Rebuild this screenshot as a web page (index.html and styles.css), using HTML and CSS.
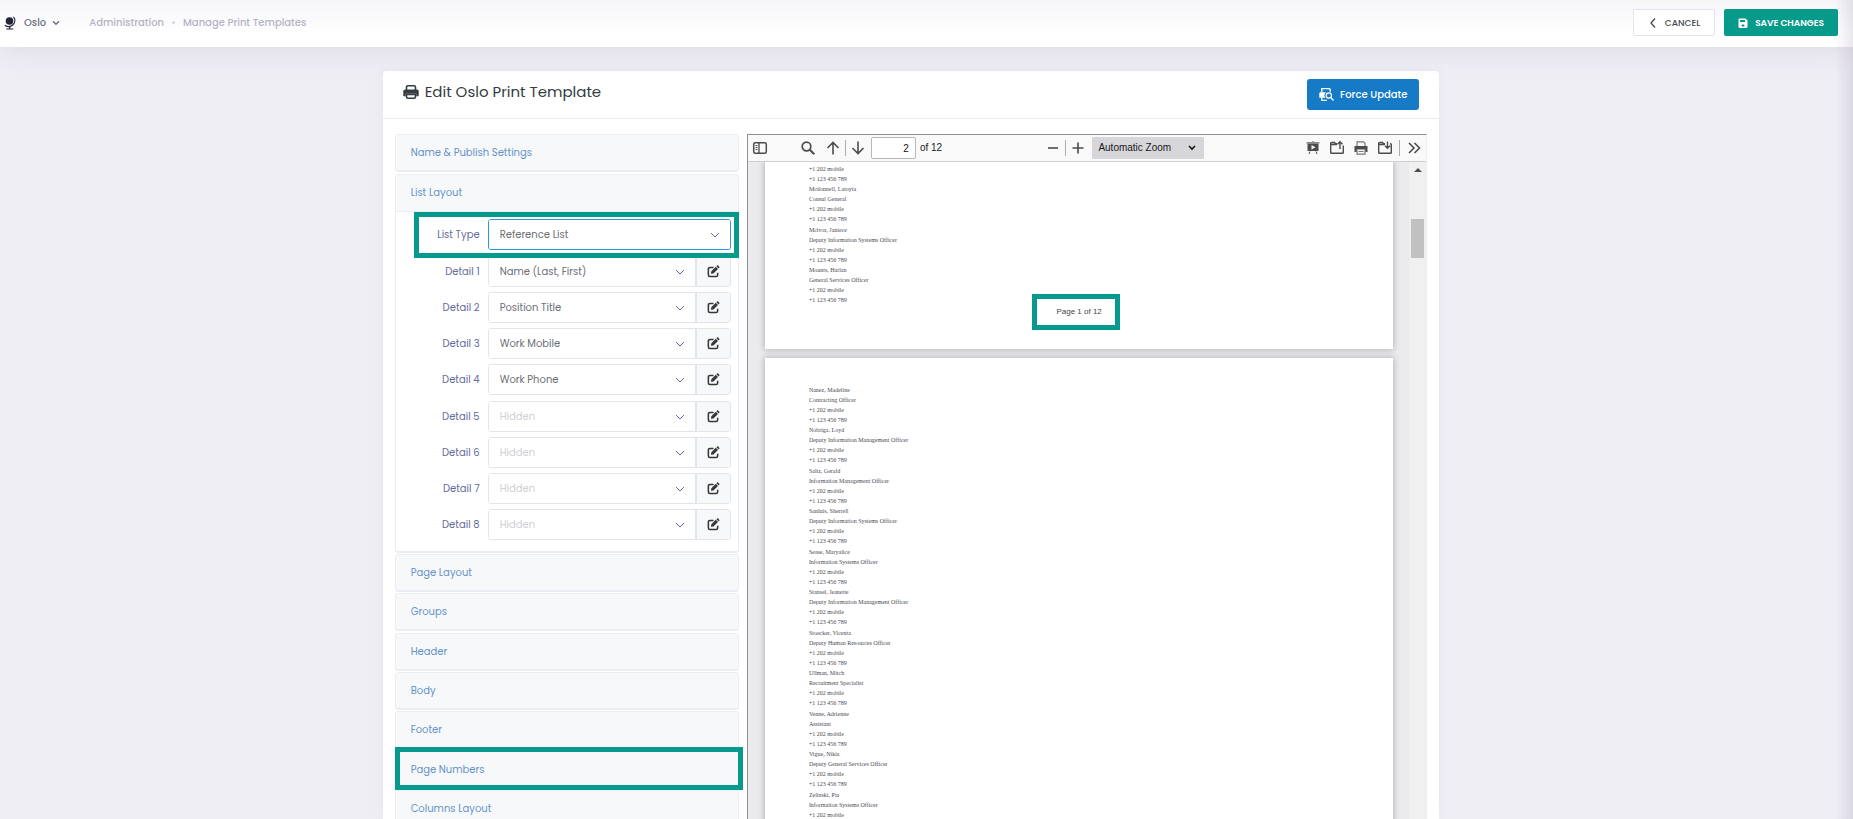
FILE: index.html
```html
<!DOCTYPE html>
<html lang="en">
<head>
<meta charset="utf-8">
<title>Edit Oslo Print Template</title>
<link rel="stylesheet" href="styles.css">
</head>
<body>
<svg class="sprite" aria-hidden="true">
  <symbol id="edit" viewBox="0 0 16 16"><path d="M8 3H3.600C2.400 3 1.700 3.700 1.700 4.800v7.600c0 1.100.7 1.800 1.900 1.800h7.600c1.200 0 1.900-.7 1.900-1.800V9.500" fill="none" stroke="currentColor" stroke-width="1.900"/><path d="M5.300 7.700 10.800 2.300l2.700 2.700-5.500 5.400-3.200.5zM11.600 1.500l.8-.8c.4-.4.9-.4 1.300 0l1.400 1.400c.4.4.4.9 0 1.300l-.8.8z" fill="currentColor"/></symbol>
  <symbol id="printer" viewBox="0 0 16 16"><path d="M3.500 6V3.200c0-.9.500-1.400 1.400-1.400h6.200c.9 0 1.400.5 1.400 1.400V6M3.500 10.500v2.300c0 .9.500 1.400 1.400 1.400h6.200c.9 0 1.400-.5 1.400-1.400v-2.300z" fill="none" stroke="currentColor" stroke-width="1.600"/><path d="M2.200 5.500h11.600c1.200 0 1.900.7 1.900 1.900v3.800c0 .7-.3 1-1 1h-1.400V9.800H2.700v2.400H1.300c-.7 0-1-.3-1-1V7.400c0-1.200.7-1.900 1.900-1.900z" fill="currentColor"/></symbol>
</svg>
<header class="topbar">
  <button class="post" type="button">
    <svg class="globe" viewBox="0 0 12 14"><circle cx="5.500" cy="5" r="3.800" fill="currentColor"/><path d="M9.500.8c1.900 2.600 1.700 6-.5 8C6.600 11 3.200 11 .8 9.200M5.700 10v3M2.300 13h7" fill="none" stroke="currentColor" stroke-width="1.200"/></svg>
    Oslo
    <svg class="caret" viewBox="0 0 8 6"><path d="M1 1.200l3 3 3-3" fill="none" stroke="currentColor" stroke-width="1.400"/></svg>
  </button>
  <nav class="crumbs" aria-label="Breadcrumb">
    <a href="#">Administration</a><span class="dot"></span><a href="#">Manage Print Templates</a>
  </nav>
  <div class="actions">
    <button class="btn cancel" type="button"><svg viewBox="0 0 10 12"><path d="M7 1.500 3 6l4 4.500" fill="none" stroke="currentColor" stroke-width="1.300"/></svg>CANCEL</button>
    <button class="btn save" type="button"><svg viewBox="0 0 10 12"><path d="M1.500 1.500h6L9.500 3.500v6.300c0 .7-.5 1.200-1.200 1.200H1.700C1 11 .5 10.500.5 9.800V2.500c0-.6.4-1 1-1z" fill="currentColor"/><path d="M2 3h5v2H2zM4.500 7h1v1h1v1h-1v1h-1V9h-1V8h1z" fill="#069a8a"/></svg>SAVE CHANGES</button>
  </div>
</header>
<main class="content">
  <section class="card">
    <div class="card-head">
      <h1><svg viewBox="0 0 16 16"><use href="#printer"/></svg>Edit Oslo Print Template</h1>
      <button class="update" type="button"><svg viewBox="0 0 16 16"><path d="M3 5.500V1.800h8l1 1V5M3 11v3.200h5.500" fill="none" stroke="currentColor" stroke-width="1.400"/><path d="M1.500 5.500H7.500A4.300 4.300 0 0 0 7 11.500H.3V7c0-.8.5-1.500 1.200-1.500z" fill="currentColor"/><circle cx="10.500" cy="9" r="2.800" fill="none" stroke="currentColor" stroke-width="1.300"/><path d="M12.600 11.300l2.900 3" stroke="currentColor" stroke-width="1.500"/></svg>Force Update</button>
    </div>
    <div class="card-body">
      <div class="accordion">
        <div class="panel"><button class="panel-head" type="button">Name &amp; Publish Settings</button></div>
        <div class="panel open">
          <button class="panel-head" type="button">List Layout</button>
          <form class="fields">
            <div class="row first marked"><label for="lt">List Type</label><div class="control"><select id="lt"><option>Reference List</option></select></div></div>
            <div class="row"><label for="d1">Detail 1</label><div class="control"><select id="d1"><option>Name (Last, First)</option></select><button type="button" aria-label="Edit detail 1"><svg><use href="#edit"/></svg></button></div></div>
            <div class="row"><label for="d2">Detail 2</label><div class="control"><select id="d2"><option>Position Title</option></select><button type="button" aria-label="Edit detail 2"><svg><use href="#edit"/></svg></button></div></div>
            <div class="row"><label for="d3">Detail 3</label><div class="control"><select id="d3"><option>Work Mobile</option></select><button type="button" aria-label="Edit detail 3"><svg><use href="#edit"/></svg></button></div></div>
            <div class="row"><label for="d4">Detail 4</label><div class="control"><select id="d4"><option>Work Phone</option></select><button type="button" aria-label="Edit detail 4"><svg><use href="#edit"/></svg></button></div></div>
            <div class="row"><label for="d5">Detail 5</label><div class="control"><select id="d5" class="empty"><option>Hidden</option></select><button type="button" aria-label="Edit detail 5"><svg><use href="#edit"/></svg></button></div></div>
            <div class="row"><label for="d6">Detail 6</label><div class="control"><select id="d6" class="empty"><option>Hidden</option></select><button type="button" aria-label="Edit detail 6"><svg><use href="#edit"/></svg></button></div></div>
            <div class="row"><label for="d7">Detail 7</label><div class="control"><select id="d7" class="empty"><option>Hidden</option></select><button type="button" aria-label="Edit detail 7"><svg><use href="#edit"/></svg></button></div></div>
            <div class="row"><label for="d8">Detail 8</label><div class="control"><select id="d8" class="empty"><option>Hidden</option></select><button type="button" aria-label="Edit detail 8"><svg><use href="#edit"/></svg></button></div></div>
          </form>
        </div>
        <div class="panel"><button class="panel-head" type="button">Page Layout</button></div>
        <div class="panel"><button class="panel-head" type="button">Groups</button></div>
        <div class="panel"><button class="panel-head" type="button">Header</button></div>
        <div class="panel"><button class="panel-head" type="button">Body</button></div>
        <div class="panel"><button class="panel-head" type="button">Footer</button></div>
        <div class="panel marked"><button class="panel-head" type="button">Page Numbers</button></div>
        <div class="panel"><button class="panel-head" type="button">Columns Layout</button></div>
      </div>
      <div class="viewer">
        <div class="toolbar">
          <button class="tool side" type="button" aria-label="Toggle sidebar"><svg viewBox="0 0 16 16"><rect x="1.700" y="2.700" width="12.600" height="10.600" rx="1.500" fill="none" stroke="currentColor" stroke-width="1.500"/><path d="M7 3v10" stroke="currentColor" stroke-width="1.300"/><path d="M3.500 5.500h2M3.500 7.500h2M3.500 9.500h2" stroke="currentColor"/></svg></button>
          <button class="tool" type="button" aria-label="Find"><svg viewBox="0 0 16 16"><circle cx="6.500" cy="6.500" r="4.300" fill="none" stroke="currentColor" stroke-width="1.700"/><path d="M9.800 9.800l4.500 4.500" stroke="currentColor" stroke-width="2"/></svg></button>
          <div class="pair">
            <button class="tool" type="button" aria-label="Previous page"><svg viewBox="0 0 16 16"><path d="M8 14.500V2.500M2.500 8 8 2.500 13.500 8" fill="none" stroke="currentColor" stroke-width="1.600"/></svg></button>
            <span class="sep"></span>
            <button class="tool" type="button" aria-label="Next page"><svg viewBox="0 0 16 16"><path d="M8 1.500v12M2.500 8 8 13.500 13.500 8" fill="none" stroke="currentColor" stroke-width="1.600"/></svg></button>
          </div>
          <input class="page-no" type="text" value="2" aria-label="Page">
          <span class="total">of 12</span>
          <div class="pair zoom">
            <button class="tool" type="button" aria-label="Zoom out"><svg viewBox="0 0 16 16"><path d="M3 8h10" stroke="currentColor" stroke-width="1.600"/></svg></button>
            <span class="sep"></span>
            <button class="tool" type="button" aria-label="Zoom in"><svg viewBox="0 0 16 16"><path d="M2.500 8h11M8 2.500v11" stroke="currentColor" stroke-width="1.600"/></svg></button>
          </div>
          <select class="scale" aria-label="Zoom"><option>Automatic Zoom</option></select>
          <div class="right-tools">
            <button class="tool" type="button" aria-label="Presentation mode"><svg viewBox="0 0 16 16"><path d="M1.500 2h13v1.500h-13z" fill="#8a8a8d"/><path d="M2.500 3.500h11v7.500h-11z" fill="currentColor"/><path d="M6.500 5v4.500L10.500 7.200z" fill="#f9f9fa"/><path d="M5 11.500 4 14M11 11.500l1 2.500M8 1v1" stroke="currentColor"/></svg></button>
            <button class="tool" type="button" aria-label="Open file"><svg viewBox="0 0 16 16"><path d="M8 3.700H6.500L5.500 2.500H2.500c-.6 0-.8.3-.8.8v9.200c0 .5.300.8.8.8h11c.5 0 .8-.3.800-.8V5.500M2 4.500h6M11 9V2M8.500 4.200 11 1.700l2.500 2.500" fill="none" stroke="currentColor" stroke-width="1.400"/></svg></button>
            <button class="tool" type="button" aria-label="Print"><svg viewBox="0 0 16 16"><path d="M4 6V1.800h6.500L12 3.300V6" fill="none" stroke="#77777a" stroke-width="1.200"/><path d="M1.500 6h13v6h-2.300V9.500H3.800V12H1.500z" fill="currentColor"/><path d="M4 10v4.200h8V10M5.500 11.500h5" fill="none" stroke="#77777a" stroke-width="1.200"/></svg></button>
            <button class="tool" type="button" aria-label="Download"><svg viewBox="0 0 16 16"><path d="M8 3.700H6.500L5.500 2.500H2.500c-.6 0-.8.3-.8.8v9.200c0 .5.300.8.8.8h11c.5 0 .8-.3.800-.8V4.500c0-.5-.3-.8-.8-.8H13M2 4.500h6M10.500 1.500V8M8 5.800l2.500 2.500L13 5.800" fill="none" stroke="currentColor" stroke-width="1.400"/></svg></button>
            <span class="sep"></span>
            <button class="tool" type="button" aria-label="More tools"><svg viewBox="0 0 16 16"><path d="M3 3l5 5-5 5M8.500 3l5 5-5 5" fill="none" stroke="currentColor" stroke-width="1.600"/></svg></button>
          </div>
        </div>
        <div class="stage">
          <div class="pages">
            <article class="sheet end">
              <ul><li>+1 202 mobile</li><li>+1 123 456 789</li></ul>
              <ul><li>Mcdonnell, Latoyia</li><li>Consul General</li><li>+1 202 mobile</li><li>+1 123 456 789</li></ul>
              <ul><li>Mcivor, Janiece</li><li>Deputy Information Systems Officer</li><li>+1 202 mobile</li><li>+1 123 456 789</li></ul>
              <ul><li>Mounts, Harlan</li><li>General Services Officer</li><li>+1 202 mobile</li><li>+1 123 456 789</li></ul>
              <div class="folio">Page 1 of 12</div>
            </article>
            <article class="sheet">
              <ul><li>Nanez, Madeline</li><li>Contracting Officer</li><li>+1 202 mobile</li><li>+1 123 456 789</li></ul>
              <ul><li>Nobriga, Loyd</li><li>Deputy Information Management Officer</li><li>+1 202 mobile</li><li>+1 123 456 789</li></ul>
              <ul><li>Saltz, Gerald</li><li>Information Management Officer</li><li>+1 202 mobile</li><li>+1 123 456 789</li></ul>
              <ul><li>Sanluis, Sherrell</li><li>Deputy Information Systems Officer</li><li>+1 202 mobile</li><li>+1 123 456 789</li></ul>
              <ul><li>Sease, Maryalice</li><li>Information Systems Officer</li><li>+1 202 mobile</li><li>+1 123 456 789</li></ul>
              <ul><li>Stansel, Jeanette</li><li>Deputy Information Management Officer</li><li>+1 202 mobile</li><li>+1 123 456 789</li></ul>
              <ul><li>Stoecker, Vicenta</li><li>Deputy Human Resources Officer</li><li>+1 202 mobile</li><li>+1 123 456 789</li></ul>
              <ul><li>Ullman, Mitch</li><li>Recruitment Specialist</li><li>+1 202 mobile</li><li>+1 123 456 789</li></ul>
              <ul><li>Venne, Adrienne</li><li>Assistant</li><li>+1 202 mobile</li><li>+1 123 456 789</li></ul>
              <ul><li>Vigue, Nikia</li><li>Deputy General Services Officer</li><li>+1 202 mobile</li><li>+1 123 456 789</li></ul>
              <ul><li>Zelinski, Pia</li><li>Information Systems Officer</li><li>+1 202 mobile</li></ul>
            </article>
          </div>
          <div class="scrollbar"><span class="up"></span><span class="thumb"></span></div>
        </div>
      </div>
    </div>
  </section>
</main>
<div class="edge"></div>
</body>
</html>
```
FILE: styles.css
```css
* { box-sizing: border-box; }
html, body { height: 100%; }
body {
  margin: 0;
  display: flex;
  flex-direction: column;
  overflow: hidden;
  background: #efeef5;
  color: #3d3f4b;
  font: 400 10px/18px Poppins, "Open Sans", sans-serif;
}
button, input, select { font: inherit; color: inherit; margin: 0; }
button { border: 0; padding: 0; background: none; }
svg { flex: none; display: block; }
.sprite { position: absolute; width: 0; height: 0; }

.topbar {
  position: relative;
  z-index: 1;
  flex: none;
  display: flex;
  align-items: center;
  height: 47px;
  padding: 0 15px 2px 4px;
  background: linear-gradient(#f6f6f9, #fff 75%);
  box-shadow: 0 0 30px rgba(82, 63, 105, .14);
}
.post { display: flex; align-items: center; gap: 6px; font-weight: 500; color: #6c6f80; }
.globe { width: 12px; height: 14px; margin-right: 2px; color: #22223a; }
.caret { width: 8px; height: 6px; }
.crumbs { display: flex; align-items: center; margin-left: 29px; }
.crumbs a { color: #b4b3c8; font-weight: 500; text-decoration: none; }
.dot { width: 3px; height: 3px; margin: 0 8px; border-radius: 50%; background: #d5d4e2; }
.actions { display: flex; gap: 9px; margin-left: auto; }
.btn {
  display: flex;
  align-items: center;
  gap: 7px;
  height: 27px;
  padding: 0 14px;
  border-radius: 2px;
  font-size: 9px;
}
.btn svg { width: 10px; height: 12px; }
.cancel { border: 1px solid #e2e5ec; background: #fff; color: #46484f; font-weight: 500; }
.save { background: #069a8a; color: #fff; font-weight: 600; }

.content { flex: 1; display: flex; justify-content: center; min-height: 0; padding: 24px 31px 0 0; }
.card {
  display: flex;
  flex-direction: column;
  width: 58%;
  background: #fff;
  border-radius: 4px 4px 0 0;
  box-shadow: 0 0 13px rgba(82, 63, 105, .05);
}
.card-head {
  flex: none;
  display: flex;
  align-items: center;
  justify-content: space-between;
  height: 48px;
  padding: 0 20px;
  border-bottom: 1px solid #ebedf2;
}
h1 { display: flex; align-items: center; gap: 6px; margin: 0 0 6px; font-size: 15px; font-weight: 400; line-height: 22px; color: #333c40; }
h1 svg { width: 16px; height: 16px; }
.update {
  display: flex;
  align-items: center;
  gap: 6px;
  height: 31px;
  padding: 0 12px;
  border-radius: 3px;
  background: #167ac6;
  color: #fff;
  font-weight: 500;
}
.update svg { width: 15px; height: 15px; }
.card-body { flex: 1; display: grid; grid-template-columns: 344fr 680fr; gap: 8px; min-height: 0; padding: 15px 12px 0; }

.accordion { min-width: 0; }
.panel { position: relative; margin-bottom: 1px; border: 1px solid #ebedf2; border-bottom-width: 2px; border-radius: 3px; }
.panel:nth-child(3n + 1) { margin-bottom: 2px; }
.panel-head {
  display: block;
  width: 100%;
  height: 35px;
  padding: 0 15px;
  background: #f7f8fa;
  color: #6494c8;
  text-align: left;
}
.open .panel-head { height: 37px; border-bottom: 1px solid #ebedf2; }
.fields { display: flex; flex-direction: column; gap: 5px; padding: 7px 7px 10px 0; }
.row { position: relative; display: grid; grid-template-columns: 84px 1fr; gap: 8px; align-items: center; height: 31px; }
.row label { text-align: right; color: #646c9a; }
.row:nth-child(4n + 1) { margin-bottom: 1px; }
.control { display: flex; height: 31px; border: 1px solid #e2e5ec; border-radius: 3px; overflow: hidden; }
.control select {
  flex: 1;
  min-width: 0;
  border: 0;
  padding: 0 11px;
  appearance: none;
  background: #fff url("data:image/svg+xml,%3Csvg xmlns='http://www.w3.org/2000/svg' viewBox='0 0 10 6'%3E%3Cpath d='M1 1l4 4 4-4' fill='none' stroke='%23646c9a'/%3E%3C/svg%3E") no-repeat right 10px center / 10px 6px;
  color: #6c6e74;
}
.control .empty { color: #cfd0d6; }
.control button { display: grid; place-items: center; width: 35px; border-left: 2px solid #e2e5ec; background: #f7f8fa; color: #33383c; }
.control button svg { width: 13px; height: 13px; }
.first .control { border-color: #2a95e0; }
.marked::after { content: ""; position: absolute; z-index: 1; border: 5px solid #069a8e; pointer-events: none; }
.row.marked::after { inset: -7px -8px -8px 18px; }
.panel.marked::after { inset: -5px -5px -3px -1px; }

.viewer { display: flex; flex-direction: column; min-width: 0; min-height: 0; border-top: 1px solid #8f8f94; border-left: 1px solid #8f8f94; border-right: 1px solid #eee; }
.toolbar {
  flex: none;
  display: flex;
  align-items: center;
  height: 27px;
  padding: 0 4px;
  border-bottom: 1px solid #cfcfd1;
  background: #f9f9fa;
  color: #4c4c4f;
  font: 10px/16px "Liberation Sans", Arial, sans-serif;
}
.tool svg { width: 16px; height: 16px; }
.side { margin-right: 32px; }
.pair { display: flex; align-items: center; gap: 4px; margin-left: 9px; }
.sep { width: 1px; height: 16px; background: #aeaeb1; }
.page-no { width: 45px; height: 22px; margin-left: 5px; padding: 0 6px; border: 1px solid #b8b8bb; border-radius: 2px; background: #fff; color: #111; text-align: right; }
.total { margin-left: 4px; color: #222; }
.zoom { margin-left: auto; }
.scale {
  width: 112px;
  height: 22px;
  margin-left: 6px;
  padding: 0 6px;
  border: 0;
  border-radius: 1px;
  appearance: none;
  background: #d7d7db url("data:image/svg+xml,%3Csvg xmlns='http://www.w3.org/2000/svg' viewBox='0 0 8 6'%3E%3Cpath d='M1 1l3 3 3-3' fill='none' stroke='%23111' stroke-width='1.600'/%3E%3C/svg%3E") no-repeat right 8px center / 8px 6px;
  color: #18181a;
}
.right-tools { display: flex; align-items: center; gap: 8px; margin-left: 101px; }
.right-tools .sep { margin: 0 -2px; }
.stage { flex: 1; display: flex; min-height: 0; background: #ebebed; overflow: hidden; }
.pages { flex: 1; display: flex; flex-direction: column; gap: 9px; min-width: 0; padding: 0 16px 0 17px; }
.sheet {
  flex: none;
  padding: 27px 44px;
  background: #fff;
  box-shadow: 0 0 6px 1px rgba(0, 0, 0, .22);
  color: #4a4a52;
  font: 6px/10px "Liberation Serif", "Times New Roman", serif;
}
.sheet.end { padding: 2px 44px 19px; }
.sheet ul { margin: 0; padding: 0; list-style: none; }
.sheet ul:nth-child(even) { margin-bottom: 1px; }
.folio {
  position: relative;
  width: 88px;
  margin: -12px auto 0;
  padding: 13px 0;
  color: #44444a;
  font: 8px/10px "Liberation Sans", Arial, sans-serif;
  text-align: center;
}
.folio::after { content: ""; position: absolute; inset: 0 3px 0 -3px; border: 5px solid #069a8e; }
.scrollbar { flex: none; display: flex; flex-direction: column; align-items: center; width: 17px; background: #f0f0f0; }
.up { margin-top: 6px; border: 4px solid transparent; border-top-width: 0; border-bottom-color: #4f4f52; }
.thumb { width: 13px; height: 39px; margin-top: 47px; background: #c1c1c1; }
.edge { position: fixed; z-index: 2; top: 0; right: 0; bottom: 0; width: 18px; background: linear-gradient(90deg, transparent, rgba(82, 63, 105, .12)); pointer-events: none; }
```
